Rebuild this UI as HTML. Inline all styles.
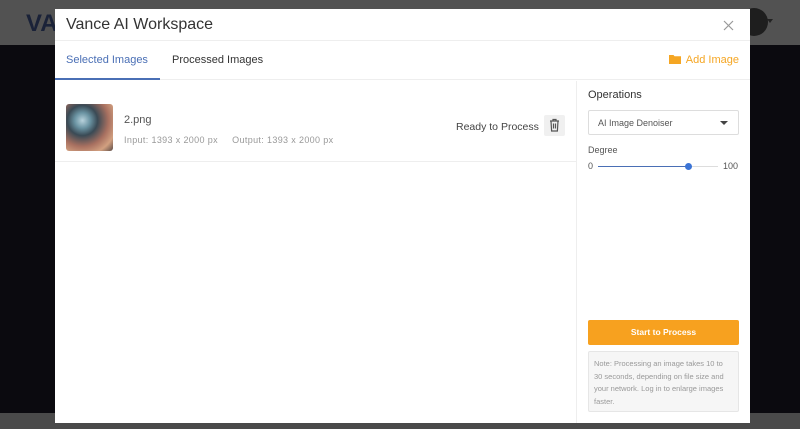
<!DOCTYPE html>
<html><head><style>
*{margin:0;padding:0;box-sizing:border-box}
body{width:800px;height:429px;overflow:hidden;position:relative;background:#0b0a0f;font-family:"Liberation Sans",sans-serif}
.top{position:absolute;left:0;top:0;width:800px;height:45px;background:#525252}
.bot{position:absolute;left:0;top:413px;width:800px;height:16px;background:#4a4a4a}
.logo{position:absolute;left:26px;top:10px;font-size:24px;color:#1a2238;font-weight:bold}
.av{position:absolute;left:740px;top:8px;width:28px;height:28px;background:#1e1e1e;border-radius:50%}
.car{position:absolute;left:767px;top:19px;border:3px solid transparent;border-top:4px solid #222}
.modal{position:absolute;left:55px;top:9px;width:695px;height:414px;background:#fff}
.hd{height:32px;border-bottom:1px solid #eee;position:relative}
.hd h1{position:absolute;left:11px;top:7px;font-size:16px;font-weight:normal;color:#333}
.x{position:absolute;right:16px;top:9px}
.tabs{height:39px;border-bottom:1px solid #eee;position:relative;font-size:11px}
.t1{position:absolute;left:0;top:0;width:105px;height:39px;border-bottom:2px solid #4a6fb5;color:#4a6fb5;padding:13px 0 0 11px}
.t2{position:absolute;left:117px;top:13px;color:#333}
.add{position:absolute;right:11px;top:13px;color:#f5a623}
.fold{display:inline-block;vertical-align:-1px;margin-right:5px}
.left{position:absolute;left:0;top:72px;width:522px;height:342px;border-right:1px solid #eee}
.row{height:81px;border-bottom:1px solid #eee;position:relative}
.th{position:absolute;left:11px;top:23px;width:47px;height:47px;border-radius:3px;background:radial-gradient(circle at 35% 35%,#b8d2dc 0,#6a93a2 18%,#3a4a55 35%,#a87060 60%,#d2a080 80%,#5a4a45 100%)}
.fn{position:absolute;left:69px;top:33px;font-size:11px;color:#555}
.dim{position:absolute;left:69px;top:54px;font-size:9px;color:#999;letter-spacing:.35px;white-space:nowrap}
.rdy{position:absolute;left:401px;top:40px;font-size:10.5px;color:#444}
.del{position:absolute;left:489px;top:34px;width:21px;height:21px;background:#f0f0f0;border-radius:2px}
.right{position:absolute;left:523px;top:72px;width:172px;height:342px}
.op{position:absolute;left:10px;top:8px;font-size:11px;color:#333}
.sel{position:absolute;left:10px;top:29px;width:151px;height:25px;border:1px solid #ddd;border-radius:2px;font-size:9px;color:#555;padding:7px 9px}
.sel:after{content:"";position:absolute;right:10px;top:10px;border:4px solid transparent;border-top:4px solid #444}
.deg{position:absolute;left:10px;top:64px;font-size:9px;color:#555}
.n0{position:absolute;left:10px;top:80px;font-size:9px;color:#555}
.n1{position:absolute;left:145px;top:80px;font-size:9px;color:#555}
.trk{position:absolute;left:20px;top:85px;width:120px;height:1px;background:#ddd}
.fil{position:absolute;left:20px;top:85px;width:90px;height:1px;background:#4a6fb5}
.kn{position:absolute;left:107px;top:82px;width:7px;height:7px;border-radius:50%;background:#3b74d6}
.btn{position:absolute;left:10px;top:239px;width:151px;height:25px;background:#f7a11f;border-radius:2px;color:#fff;font-size:8.5px;font-weight:bold;text-align:center;line-height:25px}
.note{position:absolute;left:10px;top:270px;width:151px;height:61px;background:#f6f6f6;border:1px solid #e6e6e6;border-radius:2px;font-size:7.5px;color:#999;padding:6px 5px;line-height:12.5px}
</style></head><body>
<div class="top"></div><div class="bot"></div>
<div class="logo">VA</div><div class="av"></div><div class="car"></div>
<div class="modal">
<div class="hd"><h1>Vance AI Workspace</h1><div class="x"><svg width="11" height="11" viewBox="0 0 11 11" stroke="#999" stroke-width="1.2"><path d="M1 1L10 10M10 1L1 10"/></svg></div></div>
<div class="tabs"><div class="t1">Selected Images</div><div class="t2">Processed Images</div><div class="add"><svg class="fold" width="12" height="10" viewBox="0 0 12 10"><path d="M0 1h4.5l1 1.3H12V10H0z" fill="#f5a623"/></svg>Add Image</div></div>
<div class="left"><div class="row"><div class="th"></div><div class="fn">2.png</div><div class="dim">Input: 1393 x 2000 px &nbsp;&nbsp;&nbsp; Output: 1393 x 2000 px</div><div class="rdy">Ready to Process</div>
<div class="del"><svg width="21" height="21" viewBox="0 0 21 21" fill="none" stroke="#555" stroke-width="1.2"><path d="M6 6h9M9 6V4.5h3V6M7 6l.6 10h5.8L14 6M9.5 8.5v5M11.5 8.5v5"/></svg></div></div></div>
<div class="right"><div class="op">Operations</div><div class="sel">AI Image Denoiser</div><div class="deg">Degree</div><div class="n0">0</div><div class="n1">100</div><div class="trk"></div><div class="fil"></div><div class="kn"></div>
<div class="btn">Start to Process</div>
<div class="note">Note: Processing an image takes 10 to 30 seconds, depending on file size and your network. Log in to enlarge images faster.</div></div>
</div>
</body></html>
